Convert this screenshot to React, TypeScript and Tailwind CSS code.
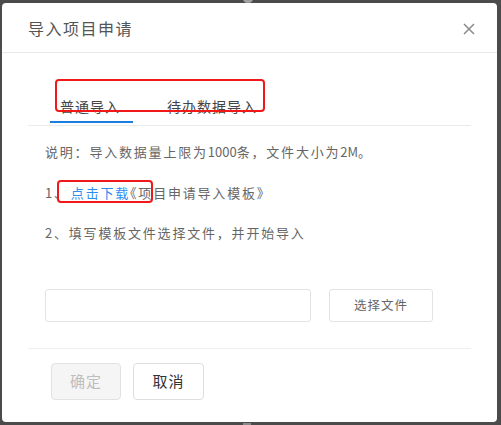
import React from "react";

const font = { fontFamily: '"Noto Sans CJK SC", "Noto Sans", sans-serif' };

export default function App() {
  return (
    <div
      className="relative w-[501px] h-[425px] bg-[#4b4b4b] overflow-hidden pt-[3px] pl-[2px]"
      style={font}
    >
      <div className="absolute left-[243px] top-[-6px] w-[10px] h-[9px] rounded-full bg-[#a0a0a0]" />
      <div className="absolute left-[243px] bottom-0 w-[8px] h-[2px] bg-[#8a8a8a]" />
      <ImportDialog />
    </div>
  );
}

const ImportDialog = () => {
  return (
    <div className="relative w-[495px] h-[419px] bg-white rounded-[4px] flex flex-col">
      <div className="h-[50px] shrink-0 flex items-center justify-between pl-[26px] pr-[22px] border-b border-[#e8e8e8]">
        <span className="text-[16px] tracking-[1.5px] text-[#555]">导入项目申请</span>
        <svg width="12" height="12" viewBox="0 0 12 12" className="mt-[2px]">
          <path d="M1 1L11 11M11 1L1 11" stroke="#8a8a8a" strokeWidth="1.5" />
        </svg>
      </div>

      <div className="px-[26px] flex-1 flex flex-col">
        {/* tabs */}
        <div className="relative">
          <div className="flex pl-[22px] pt-[40px]">
            <div className="w-[83px] pb-[4px] border-b-2 border-[#1a7fe0] text-center pr-[3px]">
              <span className="text-[14px] leading-[20px] tracking-[1px] text-[#444]">普通导入</span>
            </div>
            <div className="ml-[34px] pb-[4px]">
              <span className="text-[14px] leading-[20px] tracking-[1px] text-[#444]">待办数据导入</span>
            </div>
          </div>
          <div className="mt-[2px] h-px bg-[#ebebeb]" />
          <div className="absolute left-[27px] top-[26px] w-[210px] h-[33px] border-2 border-[#f01818] rounded-[4px]" />
        </div>

        {/* notes */}
        <div className="pl-[17px] pt-[16px] text-[13px] leading-[20px] tracking-[1.8px] text-[#666] flex flex-col gap-[20.5px]">
          <p>
            说明：导入数据量上限为<span className="tracking-normal">1000</span>条，文件大小为
            <span className="tracking-normal">2M</span>。
          </p>
          <p className="relative">
            1、<span className="ml-[2px] text-[#2d8cf0]">点击下载</span>
            <span className="[font-feature-settings:'halt']">《</span>项目申请导入模板
            <span className="[font-feature-settings:'halt']">》</span>
            <span className="absolute left-[12px] top-[-3px] w-[96px] h-[23px] border-2 border-[#f01818] rounded-[4px]" />
          </p>
          <p>2、填写模板文件选择文件，并开始导入</p>
        </div>

        {/* file picker */}
        <div className="flex items-center pl-[17px] mt-[46px]">
          <div className="w-[266px] h-[33px] border border-[#e3e3e3] rounded-[3px]" />
          <button className="ml-[18px] w-[104px] h-[33px] border border-[#e3e3e3] rounded-[3px] bg-white text-[12.5px] tracking-[1px] text-[#666]">
            选择文件
          </button>
        </div>

        <div className="mt-[26px] h-px bg-[#eeeeee]" />

        {/* footer buttons */}
        <div className="flex gap-[12px] pl-[23px] mt-[14px]">
          <button className="w-[70px] h-[37px] rounded-[4px] border border-[#e2e2e2] bg-[#f5f5f5] text-[15px] tracking-[1px] text-[#bdbdbd]">
            确定
          </button>
          <button className="w-[71px] h-[37px] rounded-[4px] border border-[#dedede] bg-white text-[15px] tracking-[1px] text-[#333]">
            取消
          </button>
        </div>
      </div>
    </div>
  );
};
